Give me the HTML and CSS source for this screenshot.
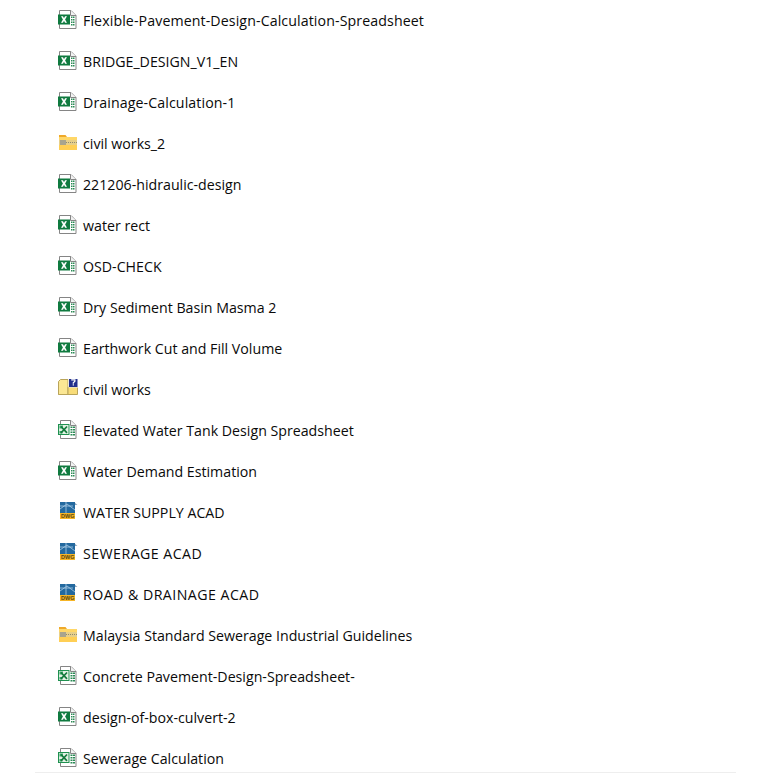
FILE: index.html
```html
<!DOCTYPE html>
<html lang="en">
<head>
<meta charset="utf-8">
<title>Files</title>
<link rel="stylesheet" href="styles.css">
</head>
<body>
<svg class="defs" width="0" height="0" aria-hidden="true">
  <symbol id="xl" viewBox="0 0 20 20">
    <path d="M1.500 .5H13L18 5.500V18.500H1.500Z" fill="#fff" stroke="#858585"/>
    <path d="M12.500 .5V5.500H18" fill="#f2f2f2" stroke="#858585"/>
    <path d="M13 6.500h1.500v1.500H13zM15 6.500h1.500v1.500H15zM13 9h1.500v1.500H13zM15 9h1.500v1.500H15zM13 11.500h1.500V13H13zM15 11.500h1.500V13H15zM13 14h1.500v1.500H13zM15 14h1.500v1.500H15z" fill="#2b8a55"/>
    <rect x="0" y="4.500" width="12" height="10" fill="#0f7a3f"/>
    <path d="M3 6.300h2l1 1.900 1-1.900h2L7.100 9.500l1.900 3.200H7L6 10.800l-1 1.900H3l1.900-3.200Z" fill="#fff"/>
  </symbol>
  <symbol id="xl-old" viewBox="0 0 20 20">
    <path d="M2.500 .5H13L18 5.500V18.500H2.500Z" fill="#fff" stroke="#858585"/>
    <path d="M12.500 .5V5.500H18" fill="#f2f2f2" stroke="#858585"/>
    <path d="M12.500 6.500h2v1.500h-2zM15 6.500h2v1.500h-2zM12.500 9h2v1.500h-2zM15 9h2v1.500h-2zM12.500 11.500h2V13h-2zM15 11.500h2V13h-2zM12.500 14h2v1.500h-2zM15 14h2v1.500h-2z" fill="#2b8a55"/>
    <rect x=".5" y="4.500" width="10.500" height="10" fill="#e3f1e4" stroke="#1f9150"/>
    <path d="M1.500 5.500h3.500v3H1.500zM1.500 11h3v2.500h-3z" fill="#3aa76b"/>
    <path d="M3 6.500 9 12.800M9 6.500 3 12.800" stroke="#137a3c" stroke-width="1.700"/>
  </symbol>
  <symbol id="zip" viewBox="0 0 20 20">
    <path d="M1 2h6.500L9 4H19V17H1Z" fill="#efa92a"/>
    <rect x="1" y="4" width="18" height="3" fill="#ffd768"/>
    <rect x="1" y="7" width="18" height="5" fill="#e6cf8a"/>
    <rect x="2" y="7" width="6" height="5" fill="#a8a48e"/>
    <path d="M8 9.500h11" stroke="#8f8a72" stroke-width="1" stroke-dasharray="1 1"/>
    <rect x="1" y="12" width="18" height="5" fill="#ffcf55"/>
  </symbol>
  <symbol id="help" viewBox="0 1 20 20">
    <path d="M.5 3.500 2.500 1.500H10V16.500H.5Z" fill="#fbe794" stroke="#b9a45a"/>
    <path d="M.5 16.500H19.500V9H10V16.500" fill="#f8dc78" stroke="#b9a45a"/>
    <rect x="10.500" y="-.5" width="9.500" height="10" fill="#fff"/>
    <rect x="11" y="0" width="8.500" height="9" fill="#23308c"/>
    <path d="M13.200 1.800h3.700v1.500l-1.600 1.500v1M15.300 6.200v1.200" fill="none" stroke="#fff" stroke-width="1.200"/>
  </symbol>
  <symbol id="dwg-art" viewBox="0 0 20 20">
    <path d="M2 0H17L20 3V17H2Z" fill="#fff"/>
    <path d="M16 0 19.500 3H16Z" fill="#8fa5ba"/>
    <rect x="2" y="0" width="15" height="11" fill="#23699f"/>
    <path d="M2 7 9 2 17 8M8 0V11M2 4H15" stroke="#a9cbe6" stroke-width=".8" fill="none"/>
    <rect x="2" y="11" width="15" height="6" fill="#f6b526"/>
  </symbol>
</svg>
<main class="pane">
  <ul class="files">
    <li class="file"><svg class="ico"><use href="#xl"/></svg><span class="hy">Flexible-Pavement-Design-Calculation-Spreadsheet</span></li>
    <li class="file"><svg class="ico"><use href="#xl"/></svg><span>BRIDGE_DESIGN_V1_EN</span></li>
    <li class="file"><svg class="ico"><use href="#xl"/></svg><span class="hy">Drainage-Calculation-1</span></li>
    <li class="file"><svg class="ico"><use href="#zip"/></svg><span>civil works_2</span></li>
    <li class="file"><svg class="ico"><use href="#xl"/></svg><span>221206-hidraulic-design</span></li>
    <li class="file"><svg class="ico"><use href="#xl"/></svg><span>water rect</span></li>
    <li class="file"><svg class="ico"><use href="#xl"/></svg><span>OSD-CHECK</span></li>
    <li class="file"><svg class="ico"><use href="#xl"/></svg><span>Dry Sediment Basin Masma 2</span></li>
    <li class="file"><svg class="ico"><use href="#xl"/></svg><span>Earthwork Cut and Fill Volume</span></li>
    <li class="file"><svg class="ico"><use href="#help"/></svg><span>civil works</span></li>
    <li class="file"><svg class="ico"><use href="#xl-old"/></svg><span>Elevated Water Tank Design Spreadsheet</span></li>
    <li class="file"><svg class="ico"><use href="#xl"/></svg><span>Water Demand Estimation</span></li>
    <li class="file"><svg class="ico" viewBox="0 0 20 20"><use href="#dwg-art" width="20" height="20"/><text class="dwg-label" x="3" y="16.300">DWG</text></svg><span>WATER SUPPLY ACAD</span></li>
    <li class="file"><svg class="ico" viewBox="0 0 20 20"><use href="#dwg-art" width="20" height="20"/><text class="dwg-label" x="3" y="16.300">DWG</text></svg><span class="wide">SEWERAGE ACAD</span></li>
    <li class="file"><svg class="ico" viewBox="0 0 20 20"><use href="#dwg-art" width="20" height="20"/><text class="dwg-label" x="3" y="16.300">DWG</text></svg><span class="wide">ROAD &amp; DRAINAGE ACAD</span></li>
    <li class="file"><svg class="ico"><use href="#zip"/></svg><span>Malaysia Standard Sewerage Industrial Guidelines</span></li>
    <li class="file"><svg class="ico"><use href="#xl-old"/></svg><span>Concrete Pavement-Design-Spreadsheet-</span></li>
    <li class="file"><svg class="ico"><use href="#xl"/></svg><span>design-of-box-culvert-2</span></li>
    <li class="file"><svg class="ico"><use href="#xl-old"/></svg><span>Sewerage Calculation</span></li>
  </ul>
</main>
</body>
</html>
```
FILE: styles.css
```css
html, body {
  margin: 0;
  padding: 0;
  background: #fff;
  overflow: hidden;
}
.defs {
  display: block;
  height: 0;
}
.pane {
  height: 772px;
  margin: 0 37px 0 35px;
  border-bottom: 1px solid #eeeeee;
  overflow: hidden;
}
.files {
  list-style: none;
  margin: 0;
  padding: 0 0 0 23px;
  font-family: "Open Sans", "Noto Sans", sans-serif;
  font-size: 14.2px;
  color: #0a0a0a;
}
.file {
  display: flex;
  align-items: center;
  gap: 5px;
  height: 41px;
}
.hy {
  letter-spacing: .1px;
}
.wide {
  letter-spacing: .45px;
}
.ico {
  width: 20px;
  height: 20px;
  margin-bottom: 1px;
  flex: none;
  overflow: visible;
}
.dwg-label {
  font-family: "Liberation Sans", sans-serif;
  font-size: 5.500px;
  font-weight: 700;
  fill: #5a4512;
}
```
